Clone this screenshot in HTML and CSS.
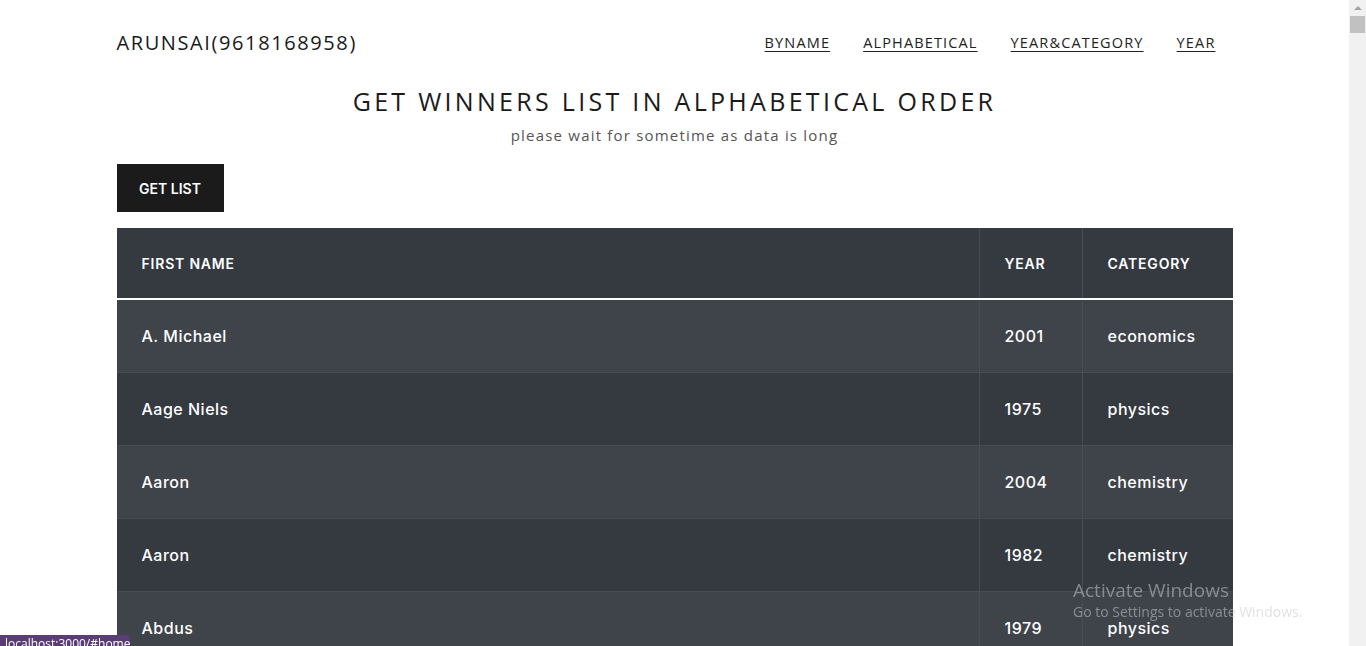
FILE: index.html
```html
<!DOCTYPE html>
<html lang="en">
<head>
<meta charset="utf-8">
<title>Winners</title>
<link rel="stylesheet" href="styles.css">
</head>
<body>
<div class="page">
  <header class="topbar">
    <div class="brand">ARUNSAI(9618168958)</div>
    <nav class="nav">
      <a href="#byname">BYNAME</a>
      <a href="#alpha">ALPHABETICAL</a>
      <a href="#yc">YEAR&amp;CATEGORY</a>
      <a href="#year">YEAR</a>
    </nav>
  </header>
  <section class="intro">
    <h1>GET WINNERS LIST IN ALPHABETICAL ORDER</h1>
    <p>please wait for sometime as data is long</p>
  </section>
  <button class="btn">GET LIST</button>
  <table class="winners">
    <thead>
      <tr><th class="c-name">FIRST NAME</th><th class="c-year">YEAR</th><th class="c-cat">CATEGORY</th></tr>
    </thead>
    <tbody>
      <tr><td>A. Michael</td><td>2001</td><td>economics</td></tr>
      <tr><td>Aage Niels</td><td>1975</td><td>physics</td></tr>
      <tr><td>Aaron</td><td>2004</td><td>chemistry</td></tr>
      <tr><td>Aaron</td><td>1982</td><td>chemistry</td></tr>
      <tr><td>Abdus</td><td>1979</td><td>physics</td></tr>
      <tr><td>Abhijit</td><td>2019</td><td>economics</td></tr>
    </tbody>
  </table>
</div>
<div class="scrollbar"><div class="arrow"></div><div class="thumb"></div></div>
<div class="status">localhost:3000/#home</div>
<div class="watermark">
  <div class="wm-title">Activate Windows</div>
  <div class="wm-sub">Go to Settings to activate Windows.</div>
</div>
</body>
</html>
```

FILE: styles.css
```css
html, body {
  margin: 0;
  padding: 0;
  background: #fff;
  overflow: hidden;
}
body {
  width: 1349px;
  height: 646px;
  font-family: "Lato", "Open Sans", sans-serif;
  color: #222;
}
.page {
  width: 1116px;
  margin: 0 auto;
}
.topbar {
  display: flex;
  justify-content: space-between;
  align-items: center;
  height: 85px;
  padding-right: 17px;
}
.brand {
  font-family: "Open Sans", sans-serif;
  font-size: 20px;
  letter-spacing: 1.6px;
  color: #1a1a1a;
}
.nav {
  display: flex;
  gap: 33px;
}
.nav a {
  font-family: "Open Sans", sans-serif;
  font-size: 14.5px;
  letter-spacing: 1.15px;
  color: #222;
  text-decoration: underline;
  text-underline-offset: 3px;
}
.intro {
  text-align: center;
}
.intro h1 {
  margin: 0;
  font-family: "Open Sans", sans-serif;
  font-weight: 400;
  font-size: 25px;
  letter-spacing: 3.3px;
  color: #1a1a1a;
  line-height: 32px;
}
.intro p {
  margin: 7px 0 0;
  font-family: "Open Sans", sans-serif;
  font-size: 15px;
  letter-spacing: 1.2px;
  color: #555;
  line-height: 22px;
}
.btn {
  display: block;
  margin-top: 18px;
  width: 107px;
  height: 48px;
  border: 0;
  background: #1b1b1b;
  color: #fff;
  font-family: "Inter", sans-serif;
  font-weight: 600;
  font-size: 14px;
  padding: 0;
}
.winners {
  margin-top: 16px;
  width: 100%;
  border-collapse: collapse;
  background: #343a40;
  color: #fff;
  font-family: "Inter", sans-serif;
  letter-spacing: 0.5px;
}
.winners th, .winners td {
  text-align: left;
  padding: 0 24px 0 25px;
  border-left: 1px solid #454d55;
}
.winners th:first-child, .winners td:first-child {
  border-left: 0;
}
.winners th {
  height: 70px;
  font-size: 14px;
  font-weight: 600;
  letter-spacing: 0.8px;
  border-bottom: 2px solid #fff;
}
.winners td {
  height: 72px;
  font-size: 16px;
  font-weight: 500;
  border-top: 1px solid #454d55;
}
.winners tbody tr:first-child td {
  border-top: 0;
}
.winners tbody tr:nth-child(odd) {
  background: #3f444a;
}
.c-year { width: 53px; }
.c-cat { width: 101px; }
.scrollbar {
  position: fixed;
  top: 0;
  right: 0;
  width: 17px;
  height: 646px;
  background: #f1f1f1;
}
.scrollbar .arrow {
  width: 0;
  height: 0;
  margin: 6px auto 0;
  border-left: 4px solid transparent;
  border-right: 4px solid transparent;
  border-bottom: 4px solid #a3a3a3;
}
.scrollbar .thumb {
  margin: 6px auto 0;
  width: 15px;
  height: 17px;
  background: #c1c1c1;
}
.status {
  position: fixed;
  left: 0;
  bottom: 0;
  height: 11px;
  padding: 0 5px;
  background: #5a3d75;
  color: #fff;
  font-family: "Open Sans", sans-serif;
  font-size: 12px;
  line-height: 18px;
  overflow: hidden;
  width: 120px;
  border-top-right-radius: 3px;
}
.watermark {
  position: fixed;
  left: 1073px;
  top: 578px;
  color: rgba(200, 200, 200, 0.55);
  font-family: "Open Sans", sans-serif;
  pointer-events: none;
}
.wm-title {
  font-size: 19px;
  line-height: 24px;
}
.wm-sub {
  font-size: 14px;
  line-height: 20px;
}
```
